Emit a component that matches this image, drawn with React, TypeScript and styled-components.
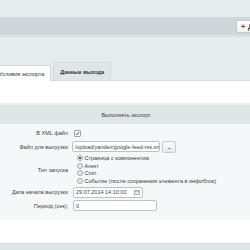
import React, { type FC } from 'react';
import styled, { createGlobalStyle } from 'styled-components';

const GlobalStyle = createGlobalStyle`
  html, body {
    margin: 0;
    padding: 0;
    background: #e6ecee;
    font-family: "Liberation Sans", Arial, sans-serif;
    color: #3a4245;
  }
`;

const Page = styled.div`
  width: 250px;
  height: 250px;
  overflow: hidden;
  display: flex;
  flex-direction: column;
  font-size: 5.5px;
`;

const TopStrip = styled.div`
  height: 17px;
  flex-shrink: 0;
`;

const Toolbar = styled.div`
  height: 18px;
  flex-shrink: 0;
  display: flex;
  align-items: center;
  padding-left: 236px;
  background: #ced8db;
  border-bottom: 2px solid #dbe2e4;
  overflow: hidden;
`;

const AddButton = styled.div`
  flex-shrink: 0;
  height: 11px;
  margin-top: 1px;
  padding: 0 4px;
  display: flex;
  align-items: center;
  gap: 3px;
  white-space: nowrap;
  background: linear-gradient(#ffffff, #eef2f3);
  border: 1px solid #c3cdd0;
  border-radius: 2px;
  font-weight: bold;
  color: #3c4548;
  font-size: 7px;
`;

const TabsRow = styled.div`
  margin-top: 25px;
  height: 18px;
  flex-shrink: 0;
  display: flex;
  align-items: flex-end;
  gap: 2px;
  border-bottom: 1px solid #d3dbde;
`;

const Tab = styled.div<{ $active?: boolean }>`
  height: ${({ $active }) => ($active ? '16px' : '18px')};
  margin-bottom: ${({ $active }) => ($active ? '-1px' : '0')};
  display: flex;
  align-items: center;
  white-space: nowrap;
  box-sizing: border-box;
  padding: ${({ $active }) => ($active ? '0 6px 0 0' : '0 6px')};
  background: ${({ $active }) => ($active ? '#ffffff' : '#e0e6e8')};
  border: 1px solid #d3dbde;
  border-bottom: none;
  border-left: ${({ $active }) => ($active ? 'none' : '1px solid #d3dbde')};
  font-weight: ${({ $active }) => ($active ? 'normal' : 'bold')};
  color: #2f3638;
`;

const TabText = styled.span<{ $shift?: number }>`
  margin-left: ${({ $shift }) => `${$shift ?? 0}px`};
`;

const Panel = styled.div`
  background: #ffffff;
  display: flex;
  flex-direction: column;
  flex: 1;
`;

const PanelGap = styled.div`
  height: 22px;
  border-bottom: 2px solid #e9eef0;
`;

const SectionHeader = styled.div`
  height: 19px;
  display: flex;
  align-items: center;
  justify-content: center;
  padding-left: 2px;
  background: #dfe6e8;
  color: #3a4245;
`;

const FormArea = styled.div`
  background: #f5f8f9;
  padding: 4px 0 9px;
  display: grid;
  grid-template-columns: 68px 1fr;
  column-gap: 4px;
  row-gap: 2.5px;
  align-items: center;
`;

const Label = styled.div`
  text-align: right;
  white-space: nowrap;
`;

const Value = styled.div<{ $indent?: number }>`
  display: flex;
  align-items: center;
  gap: 2px;
  padding-left: ${({ $indent }) => `${$indent ?? 0}px`};
  min-height: 10px;
`;

const Checkbox = styled.span`
  width: 5px;
  height: 5px;
  margin-left: 2px;
  border: 1px solid #9aa5a9;
  background: #fbfcfc;
  border-radius: 1px;
  display: flex;
  align-items: center;
  justify-content: center;
`;

const TextInput = styled.div<{ $width: number }>`
  width: ${({ $width }) => `${$width}px`};
  height: 11px;
  box-sizing: border-box;
  display: flex;
  align-items: center;
  justify-content: space-between;
  padding: 0 2px;
  background: #ffffff;
  border: 1px solid #b9c3c7;
  border-radius: 2px;
  overflow: hidden;
  white-space: nowrap;
`;

const SmallButton = styled.div`
  width: 14px;
  height: 12px;
  box-sizing: border-box;
  display: flex;
  align-items: center;
  justify-content: center;
  background: linear-gradient(#fbfcfc, #e4eaec);
  border: 1px solid #c4ced1;
  border-radius: 2px;
  color: #50595c;
  font-weight: bold;
  letter-spacing: -0.5px;
`;

const RadioList = styled.div`
  display: flex;
  flex-direction: column;
  gap: 1.7px;
  padding-left: 5px;
`;

const RadioRow = styled.div`
  display: flex;
  align-items: center;
  gap: 1.5px;
  height: 6px;
  white-space: nowrap;
`;

const Radio = styled.span<{ $checked?: boolean }>`
  width: 4px;
  height: 4px;
  border-radius: 50%;
  border: 0.5px solid #a0aaae;
  background: ${({ $checked }) =>
    $checked ? 'radial-gradient(#4a5256 40%, #e8ecee 55%)' : '#e6ebed'};
`;

const Bottom = styled.div`
  flex: 1;
  display: flex;
  flex-direction: column;
`;

const WhiteSpace = styled.div`
  height: 23px;
  background: #ffffff;
`;

const Footer = styled.div`
  flex: 1;
  background: #dfe5e7;
  border-top: 1px solid #d5dcdf;
`;

const radioOptions = [
  { id: 'page', label: 'Страница с компонентом', checked: true },
  { id: 'agent', label: 'Агент' },
  { id: 'cron', label: 'Cron' },
  { id: 'event', label: 'Событие (после сохранения элемента в инфоблок)' },
];

const CalendarIcon: FC = () => (
  <svg width="6" height="5" viewBox="0 0 6 5">
    <rect x="0.5" y="0.5" width="5" height="4" fill="#f3f5f6" stroke="#8d979b" strokeWidth="0.7" />
    <line x1="0.5" y1="1.6" x2="5.5" y2="1.6" stroke="#8d979b" strokeWidth="0.6" />
    <line x1="2" y1="2.4" x2="2" y2="4.2" stroke="#b3bbbe" strokeWidth="0.4" />
    <line x1="4" y1="2.4" x2="4" y2="4.2" stroke="#b3bbbe" strokeWidth="0.4" />
  </svg>
);

const CheckMark: FC = () => (
  <svg width="5" height="5" viewBox="0 0 5 5">
    <path d="M0.8 2.6 L2 3.8 L4.3 0.9" fill="none" stroke="#3b4346" strokeWidth="0.9" />
  </svg>
);

const App: FC = () => (
  <>
    <GlobalStyle />
    <Page>
      <TopStrip />
      <Toolbar>
        <AddButton>
          <span>+</span>
          <span>Добавить</span>
        </AddButton>
      </Toolbar>

      <TabsRow>
        <Tab $active>
          <TabText $shift={-1}>Условия экспорта</TabText>
        </Tab>
        <Tab>
          <TabText>Данные выхода</TabText>
        </Tab>
      </TabsRow>

      <Panel>
        <PanelGap />
        <SectionHeader>Выполнять экспорт</SectionHeader>

        <FormArea>
          <Label>В XML файл</Label>
          <Value>
            <Checkbox>
              <CheckMark />
            </Checkbox>
          </Value>

          <Label>Файл для выгрузки</Label>
          <Value $indent={-2}>
            <TextInput $width={88}>/upload/yandex/google-feed-rss.xml</TextInput>
            <SmallButton>...</SmallButton>
          </Value>

          <Label>Тип запуска</Label>
          <RadioList>
            {radioOptions.map(option => (
              <RadioRow key={option.id}>
                <Radio $checked={option.checked} />
                <span>{option.label}</span>
              </RadioRow>
            ))}
          </RadioList>

          <Label>Дата начала выгрузки</Label>
          <Value $indent={1}>
            <TextInput $width={70}>
              <span>29.07.2014 14:10:00</span>
              <CalendarIcon />
            </TextInput>
          </Value>

          <Label>Период (сек):</Label>
          <Value $indent={1}>
            <TextInput $width={84}>0</TextInput>
          </Value>
        </FormArea>

        <Bottom>
          <WhiteSpace />
          <Footer />
        </Bottom>
      </Panel>
    </Page>
  </>
);

export default App;
